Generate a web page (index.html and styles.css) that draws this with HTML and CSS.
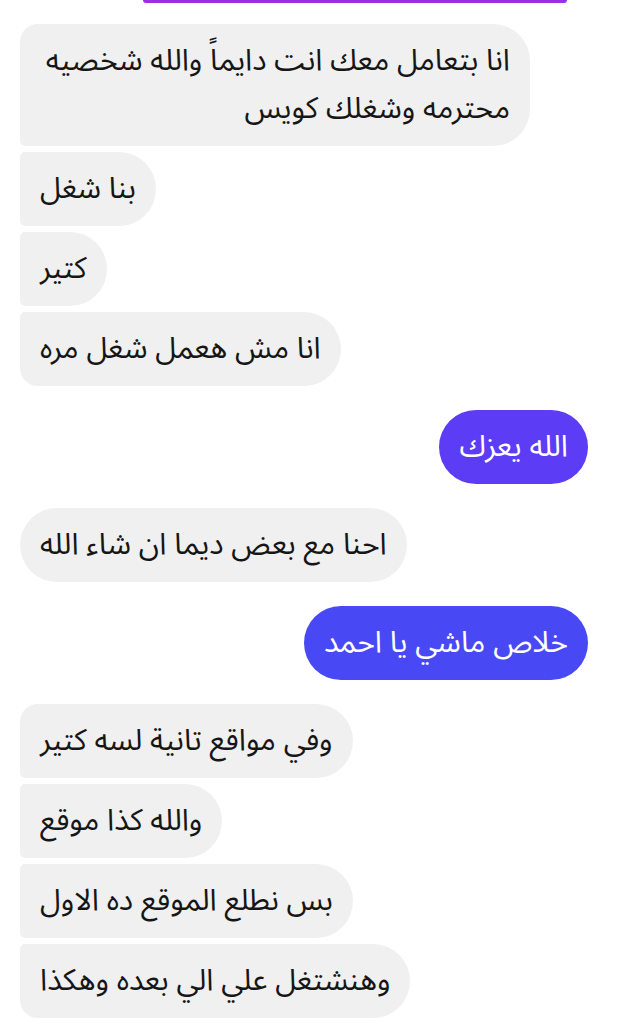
FILE: index.html
```html
<!DOCTYPE html>
<html lang="ar">
<head>
    <meta charset="UTF-8">
    <meta name="viewport" content="width=device-width, initial-scale=1.0">
    <title>Chat</title>
    <link rel="stylesheet" href="styles.css">
</head>
<body>
    <div class="chat">
        <div class="clipped"></div>

        <div class="group in">
            <div class="msg first">انا بتعامل معك انت دايماً والله شخصيه محترمه وشغلك كويس</div>
            <div class="msg mid">بنا شغل</div>
            <div class="msg mid">كتير</div>
            <div class="msg last">انا مش هعمل شغل مره</div>
        </div>

        <div class="group out">
            <div class="msg sent-a">الله يعزك</div>
        </div>

        <div class="group in">
            <div class="msg">احنا مع بعض ديما ان شاء الله</div>
        </div>

        <div class="group out">
            <div class="msg sent-b">خلاص ماشي يا احمد</div>
        </div>

        <div class="group in">
            <div class="msg first">وفي مواقع تانية لسه كتير</div>
            <div class="msg mid">والله كذا موقع</div>
            <div class="msg mid">بس نطلع الموقع ده الاول</div>
            <div class="msg last">وهنشتغل علي الي بعده وهكذا</div>
        </div>
    </div>
</body>
</html>
```

FILE: styles.css
```css
body {
    margin: 0;
    background-color: #fff;
    font-family: "Noto Sans Arabic", "DejaVu Sans", sans-serif;
    color: #161616;
}
.chat {
    display: flex;
    flex-direction: column;
    gap: 24px;
    padding: 0 20px;
}
.clipped {
    height: 3px;
    margin: 0 47px -3px 123px;
    background-color: #9a2fe8;
    border-radius: 0 0 4px 4px;
}
.group {
    display: flex;
    flex-direction: column;
    gap: 6px;
}
.group.in {
    align-items: flex-start;
}
.group.out {
    align-items: flex-end;
    padding-right: 26px;
}
.msg {
    direction: rtl;
    max-width: 470px;
    padding: 13px 20px;
    font-size: 30px;
    line-height: 48px;
    border-radius: 37px;
    background-color: #f0f0f0;
}
.in .first {
    border-radius: 18px 37px 37px 5px;
}
.in .mid {
    border-radius: 5px 37px 37px 5px;
}
.in .last {
    border-radius: 5px 37px 37px 18px;
}
.sent-a {
    background-color: #5d3cf5;
    color: #fff;
}
.sent-b {
    background-color: #4849f4;
    color: #fff;
}
```
